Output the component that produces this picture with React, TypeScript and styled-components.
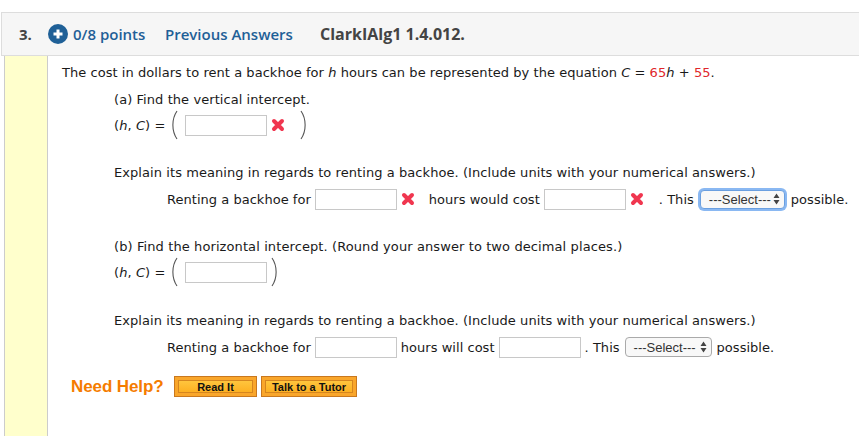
import React from 'react';
import styled, { createGlobalStyle } from 'styled-components';

const GlobalStyle = createGlobalStyle`
    html, body {
        margin: 0;
        padding: 0;
        background: #fff;
    }
    body {
        width: 859px;
        height: 436px;
        overflow: hidden;
        font-family: 'DejaVu Sans', Verdana, sans-serif;
        font-size: 13px;
        color: #1a1a1a;
    }
`;

const Page = styled.div`
    height: 436px;
    padding-top: 12px;
    box-sizing: border-box;
    display: flex;
    flex-direction: column;
`;

const Header = styled.div`
    height: 44px;
    margin-left: 1px;
    box-sizing: border-box;
    display: flex;
    align-items: center;
    padding-left: 17px;
    background: #f6f6f6;
    border: 1px solid #ddd;
    border-right: none;
    font-family: 'Open Sans', sans-serif;
    font-size: 15px;
    font-weight: 600;
`;

const Number = styled.span`
    width: 29px;
    font-weight: 700;
    color: #444;
`;

const PlusBadge = styled.svg`
    width: 20px;
    height: 20px;
    margin-right: 5px;
`;

const Points = styled.span`
    width: 92px;
    color: #1f6097;
`;

const PrevAnswers = styled.span`
    width: 155px;
    color: #1f6097;
`;

const QuestionId = styled.span`
    font-size: 16px;
    font-weight: 700;
    color: #444;
`;

const Body = styled.div`
    flex: 1;
    display: flex;
`;

const Sidebar = styled.div`
    width: 42px;
    margin-left: 4px;
    background: #ffffcc;
    border-left: 1px solid #ccc;
    border-right: 1px solid #ccc;
`;

const Content = styled.div`
    flex: 1;
    padding: 7px 0 0 14px;
`;

const Line = styled.div<{ $indent?: number; $top?: number; $height?: number; $spacing?: number }>`
    display: flex;
    align-items: center;
    white-space: pre;
    height: ${(p) => p.$height ?? 18}px;
    margin-left: ${(p) => p.$indent ?? 0}px;
    margin-top: ${(p) => p.$top ?? 0}px;
    letter-spacing: ${(p) => p.$spacing ?? 0.07}px;
`;

const Red = styled.span`
    color: #e0262b;
`;

const Answer = styled.input<{ $left?: number; $right?: number }>`
    width: 82px;
    height: 21px;
    box-sizing: border-box;
    margin: 0 ${(p) => p.$right ?? 0}px 0 ${(p) => p.$left ?? 4}px;
    padding: 0;
    background: #fff;
    border: 1px solid #c8c8c8;
    border-radius: 0;
`;

const Paren = styled.svg<{ $left: number }>`
    width: 9px;
    height: 30px;
    flex: none;
    margin-left: ${(p) => p.$left}px;
`;

const CrossIcon = styled.svg<{ $right: number }>`
    width: 14px;
    height: 14px;
    flex: none;
    margin-left: 4px;
    margin-right: ${(p) => p.$right}px;
`;

const SelectBox = styled.div<{ $focused?: boolean }>`
    display: flex;
    align-items: center;
    justify-content: space-between;
    width: ${(p) => (p.$focused ? 85 : 87)}px;
    height: ${(p) => (p.$focused ? 19 : 20)}px;
    box-sizing: border-box;
    margin: 0 ${(p) => (p.$focused ? 6 : 5)}px;
    padding: 0 4px 0 8px;
    background: #f8f8f8;
    border: 1px solid ${(p) => (p.$focused ? '#6a9fe0' : '#aaa')};
    border-radius: 4px;
    box-shadow: ${(p) => (p.$focused ? '0 0 0 2px #8ab8f2' : 'none')};
    font-family: 'Liberation Sans', Arial, sans-serif;
    font-size: 13px;
    letter-spacing: 0;
    color: #333;
`;

const Arrows = styled.svg`
    width: 7px;
    height: 12px;
    flex: none;
`;

const HelpRow = styled.div`
    display: flex;
    align-items: center;
    margin: 20px 0 0 9px;
`;

const HelpLabel = styled.span`
    width: 103px;
    font-family: 'Liberation Sans', Arial, sans-serif;
    font-size: 17px;
    font-weight: bold;
    letter-spacing: -0.1px;
    color: #f57c00;
`;

const HelpButton = styled.div<{ $width: number }>`
    width: ${(p) => p.$width}px;
    height: 21px;
    box-sizing: border-box;
    margin-right: 4px;
    padding: 3px;
    background: #f9a62b;
    border: 1px solid #c9781e;
    > span {
        display: block;
        height: 13px;
        line-height: 12px;
        box-sizing: border-box;
        text-align: center;
        background: linear-gradient(#ffc53d, #fdb022);
        border: 1px solid #d5851f;
        font-family: 'Liberation Sans', Arial, sans-serif;
        font-size: 11px;
        font-weight: bold;
        color: #111;
    }
`;

const Cross = ({ right }: { right: number }) => (
    <CrossIcon $right={right} viewBox='0 0 14 14'>
        <path d='M3 3 L11 11 M11 3 L3 11' stroke='#f0364f' strokeWidth='4' strokeLinecap='round' />
    </CrossIcon>
);

const LeftParen = () => (
    <Paren $left={5} viewBox='0 0 9 30'>
        <path d='M7 1 C1.5 9 1.5 21 7 29' fill='none' stroke='#555' strokeWidth='1.1' />
    </Paren>
);

const RightParen = ({ left }: { left: number }) => (
    <Paren $left={left} viewBox='0 0 9 30'>
        <path d='M2 1 C7.5 9 7.5 21 2 29' fill='none' stroke='#555' strokeWidth='1.1' />
    </Paren>
);

const Select = ({ focused }: { focused?: boolean }) => (
    <SelectBox $focused={focused}>
        ---Select---
        <Arrows viewBox='0 0 7 12'>
            <path d='M3.5 0.5 L6.5 5 H0.5 Z M3.5 11.5 L6.5 7 H0.5 Z' fill='#444' />
        </Arrows>
    </SelectBox>
);

const Intercept = () => (
    <>
        (<i>h</i>, <i>C</i>) =
    </>
);

const App = () => (
    <>
        <GlobalStyle />
        <Page>
            <Header>
                <Number>3.</Number>
                <PlusBadge viewBox='0 0 20 20'>
                    <circle cx='10' cy='10' r='10' fill='#1f6097' />
                    <path d='M10 5.5 V14.5 M5.5 10 H14.5' stroke='#fff' strokeWidth='3' />
                </PlusBadge>
                <Points>0/8 points</Points>
                <PrevAnswers>Previous Answers</PrevAnswers>
                <QuestionId>ClarkIAlg1 1.4.012.</QuestionId>
            </Header>
            <Body>
                <Sidebar />
                <Content>
                    <Line $spacing={0.05}>
                        The cost in dollars to rent a backhoe for <i>h</i> hours can be represented by the equation <i>C</i> = <Red>65</Red>
                        <i>h</i> + <Red>55</Red>.
                    </Line>
                    <Line $indent={52} $top={9}>(a) Find the vertical intercept.</Line>
                    <Line $indent={52} $top={2} $height={30}>
                        <Intercept />
                        <LeftParen />
                        <Answer $left={6} />
                        <Cross right={14} />
                        <RightParen left={0} />
                    </Line>
                    <Line $indent={52} $top={23}>Explain its meaning in regards to renting a backhoe. (Include units with your numerical answers.)</Line>
                    <Line $indent={105} $top={9} $spacing={0.03}>
                        Renting a backhoe for
                        <Answer />
                        <Cross right={14} />
                        hours would cost
                        <Answer />
                        <Cross right={15} />
                        . This
                        <Select focused />
                        possible.
                    </Line>
                    <Line $indent={52} $top={29} $spacing={0.1}>(b) Find the horizontal intercept. (Round your answer to two decimal places.)</Line>
                    <Line $indent={52} $top={2} $height={30}>
                        <Intercept />
                        <LeftParen />
                        <Answer $left={6} />
                        <RightParen left={3} />
                    </Line>
                    <Line $indent={52} $top={24}>Explain its meaning in regards to renting a backhoe. (Include units with your numerical answers.)</Line>
                    <Line $indent={105} $top={9} $spacing={0.03}>
                        Renting a backhoe for
                        <Answer $right={4} />
                        hours will cost
                        <Answer $right={4} />
                        . This
                        <Select />
                        possible.
                    </Line>
                    <HelpRow>
                        <HelpLabel>Need Help?</HelpLabel>
                        <HelpButton $width={83}><span>Read It</span></HelpButton>
                        <HelpButton $width={96}><span>Talk to a Tutor</span></HelpButton>
                    </HelpRow>
                </Content>
            </Body>
        </Page>
    </>
);

export default App;
